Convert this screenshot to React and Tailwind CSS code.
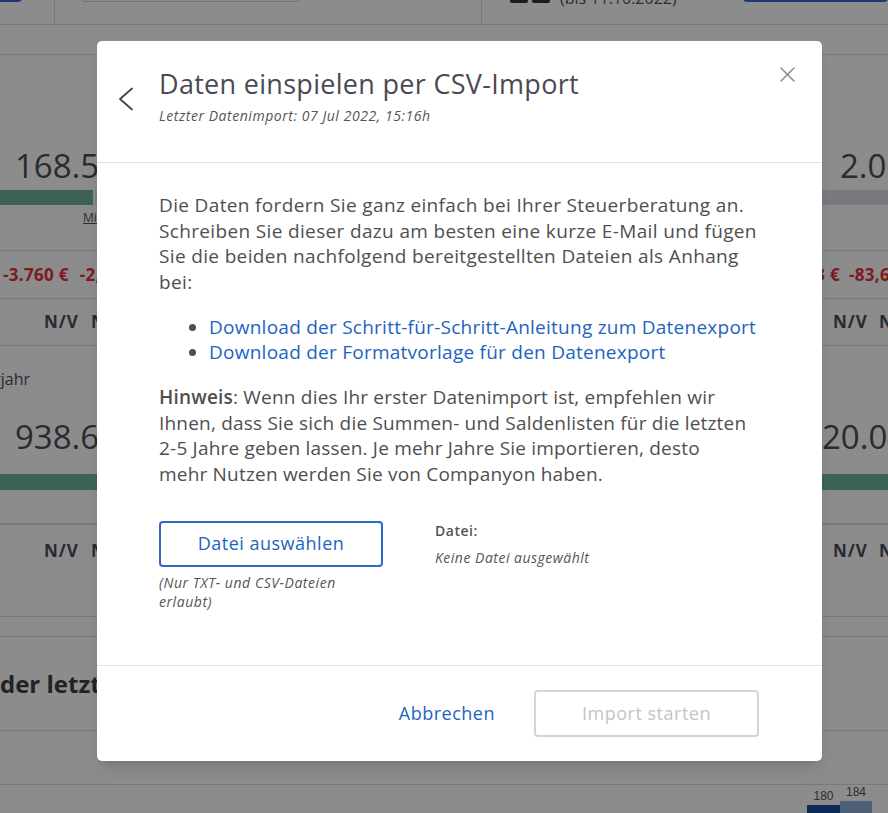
import React from 'react';

const font = { fontFamily: '"Open Sans", "Noto Sans", sans-serif' };

// Dashboard im Hintergrund (wird vom Overlay abgedunkelt)
const Dashboard = () => {
  return (
    <div className="w-[888px] h-[813px] overflow-hidden bg-white text-[#4d4d57]">
      {/* Toolbar */}
      <div className="flex h-[25px] border-b border-[#dcdcdc] overflow-hidden">
        <div className="w-[55px] border-r border-[#dcdcdc] shrink-0">
          <div className="w-[22px] h-[30px] -mt-[28px] bg-[#2f6ad0] rounded-br-[4px]" />
        </div>
        <div className="w-[427px] border-r border-[#dcdcdc] shrink-0 pl-[27px]">
          <div className="w-[218px] h-[30px] -mt-[28px] border border-[#cfcfcf] rounded-[3px]" />
        </div>
        <div className="flex flex-1 items-start">
          <div className="flex gap-[4px] ml-[28px] -mt-[20px]">
            <div className="w-[18px] h-[23px] bg-[#333] rounded-[2px]" />
            <div className="w-[18px] h-[23px] bg-[#333] rounded-[2px]" />
          </div>
          <span className="ml-[10px] -mt-[14px] text-[16px] text-[#555]">(bis 11.10.2022)</span>
          <div className="ml-auto w-[145px] h-[30px] -mt-[28px] border-2 border-[#2f6ad0] rounded-[4px]" />
        </div>
      </div>
      <div className="h-[30px] border-b border-[#dcdcdc]" />

      {/* Kennzahlen */}
      <div className="flex h-[196px] border-b border-[#dcdcdc]">
        <div className="w-[444px] shrink-0 flex flex-col">
          <div className="pl-[15px] pt-[91px] text-[33px] leading-[40px] whitespace-nowrap">168.500 €</div>
          <div className="flex mt-[4px] h-[15px]">
            <div className="w-[93px] bg-[#6fb4a0]" />
            <div className="w-[140px] bg-[#e8e8f0] ml-[2px]" />
          </div>
          <div className="pl-[83px] mt-[4px] text-[12px] underline text-[#555]">Mittelwert</div>
        </div>
        <div className="w-[444px] shrink-0 flex flex-col">
          <div className="pl-[396px] pt-[91px] text-[33px] leading-[40px] whitespace-nowrap">2.000 €</div>
          <div className="flex mt-[4px] h-[15px]">
            <div className="w-[444px] bg-[#dcdcea]" />
          </div>
        </div>
      </div>

      <div className="flex h-[48px] items-center border-b border-[#dcdcdc] text-[17px] tracking-[0.3px] font-bold text-[#e8303a] whitespace-nowrap">
        <div className="w-[444px] shrink-0 flex gap-[11px]">
          <span className="ml-[3px]">-3.760 €</span>
          <span>-2,2 %</span>
        </div>
        <div className="w-[444px] shrink-0 flex">
          <div className="w-[396px] shrink-0 flex justify-end overflow-hidden">
            <span>-4.113 €</span>
          </div>
          <span className="ml-[9px]">-83,6 %</span>
        </div>
      </div>

      <div className="flex h-[47px] items-center border-b border-[#dcdcdc] text-[17px] tracking-[1px] font-bold text-[#4d4d60] whitespace-nowrap">
        <div className="w-[444px] shrink-0 flex gap-[12px] pl-[44px]">
          <span>N/V</span>
          <span>N/V</span>
        </div>
        <div className="w-[444px] shrink-0 flex gap-[11px] pl-[389px]">
          <span>N/V</span>
          <span>N/V</span>
        </div>
      </div>

      <div className="flex h-[179px] border-b border-[#dcdcdc]">
        <div className="w-[444px] shrink-0 flex flex-col">
          <div className="w-[30px] flex justify-end overflow-hidden whitespace-nowrap pt-[21px] text-[16px] leading-[24px]">
            <span>Vorjahr</span>
          </div>
          <div className="pl-[15px] pt-[26px] text-[33px] leading-[40px] whitespace-nowrap">938.600 €</div>
        </div>
        <div className="w-[444px] shrink-0 flex flex-col">
          <div className="pl-[378px] pt-[71px] text-[33px] leading-[40px] whitespace-nowrap">20.040 €</div>
        </div>
      </div>
      <div className="-mt-[51px] h-[16px] bg-[#6fb4a0] relative" />
      <div className="h-[34px] border-b border-[#dcdcdc]" />

      <div className="flex h-[93px] pt-[14px] border-b border-[#dcdcdc] text-[17px] tracking-[1px] font-bold text-[#4d4d60] whitespace-nowrap">
        <div className="w-[444px] shrink-0 flex gap-[12px] pl-[44px]">
          <span>N/V</span>
          <span>N/V</span>
        </div>
        <div className="w-[444px] shrink-0 flex gap-[11px] pl-[389px]">
          <span>N/V</span>
          <span>N/V</span>
        </div>
      </div>
      <div className="h-[20px] border-b border-[#dcdcdc]" />

      <div className="h-[94px] flex items-center border-b border-[#dcdcdc]">
        <h2 className="text-[24px] font-bold text-[#3d3d48] whitespace-nowrap">der letzten 12 Monate</h2>
      </div>
      <div className="h-[54px] border-b border-[#dcdcdc]" />

      {/* Balkendiagramm unten rechts */}
      <div className="flex justify-end pr-[16px]">
        <div className="flex items-end">
          <div className="flex flex-col items-center w-[33px]">
            <span className="text-[12px] leading-[14px] text-[#555]" style={{ fontFamily: '"Liberation Sans", sans-serif' }}>180</span>
            <div className="w-[33px] h-[20px] mt-[2px] bg-[#1a4f9c]" />
          </div>
          <div className="flex flex-col items-center w-[32px]">
            <span className="text-[12px] leading-[14px] text-[#555]" style={{ fontFamily: '"Liberation Sans", sans-serif' }}>184</span>
            <div className="w-[32px] h-[24px] mt-[2px] bg-[#8fb0d8]" />
          </div>
        </div>
      </div>
    </div>
  );
};

const App = () => {
  return (
    <div className="relative w-[888px] h-[813px] overflow-hidden" style={font}>
      <Dashboard />

      {/* Overlay */}
      <div className="absolute inset-0 bg-black/45" />

      {/* Modal */}
      <div className="absolute left-[97px] top-[41px] w-[725px] h-[720px] bg-white rounded-[5px] shadow-lg flex flex-col">
        {/* Kopfbereich */}
        <div className="relative h-[122px] border-b border-[#e2e2e2] flex shrink-0">
          <button className="ml-[21px] mt-[46px] w-[16px] h-[24px] self-start text-[#444]">
            <svg viewBox="0 0 16 24" width="16" height="24" fill="none" stroke="currentColor" strokeWidth="1.8" strokeLinecap="round" strokeLinejoin="round">
              <polyline points="14,1.5 2,12 14,22.5" />
            </svg>
          </button>
          <div className="ml-[25px] pt-[25px]">
            <h1 className="text-[27px] leading-[35px] tracking-[0.3px] font-medium text-[#4a4a54]">Daten einspielen per CSV-Import</h1>
            <p className="mt-[5px] text-[14px] leading-[20px] tracking-[0.55px] italic text-[#555]">Letzter Datenimport: 07 Jul 2022, 15:16h</p>
          </div>
          <button className="absolute top-[26px] right-[27px] w-[15px] h-[15px] text-[#8a8a8a]">
            <svg viewBox="0 0 15 15" width="15" height="15" fill="none" stroke="currentColor" strokeWidth="1.5" strokeLinecap="round">
              <line x1="1" y1="1" x2="14" y2="14" />
              <line x1="14" y1="1" x2="1" y2="14" />
            </svg>
          </button>
        </div>

        {/* Inhalt */}
        <div className="pl-[62px] pr-[46px] pt-[30px] pb-[53px] text-[19px] leading-[25.5px] text-[#4f4f4f]">
          <p className="mb-[19.5px] tracking-[0.35px]">
            Die Daten fordern Sie ganz einfach bei Ihrer Steuerberatung an.<br />
            Schreiben Sie dieser dazu am besten eine kurze E-Mail und fügen<br />
            Sie die beiden nachfolgend bereitgestellten Dateien als Anhang<br />
            bei:
          </p>
          <ul className="list-disc pl-[50px] mb-[19.5px] tracking-[0.25px]">
            <li>
              <a href="#" className="text-[#1d63c1]">Download der Schritt-für-Schritt-Anleitung zum Datenexport</a>
            </li>
            <li>
              <a href="#" className="text-[#1d63c1]">Download der Formatvorlage für den Datenexport</a>
            </li>
          </ul>
          <p className="tracking-[0.2px]">
            <span className="font-semibold">Hinweis</span>: Wenn dies Ihr erster Datenimport ist, empfehlen wir<br />
            Ihnen, dass Sie sich die Summen- und Saldenlisten für die letzten<br />
            2-5 Jahre geben lassen. Je mehr Jahre Sie importieren, desto<br />
            mehr Nutzen werden Sie von Companyon haben.
          </p>

          <div className="flex gap-[52px] mt-[34px]">
            <div className="w-[224px] shrink-0">
              <button className="w-[224px] h-[46px] border-2 border-[#2a6bc6] rounded-[4px] text-[18px] tracking-[0.5px] text-[#1d63c1]">
                Datei auswählen
              </button>
              <p className="mt-[6px] text-[14px] leading-[19px] tracking-[0.55px] italic text-[#555]">(Nur TXT- und CSV-Dateien erlaubt)</p>
            </div>
            <div className="text-[14px] leading-[20px] tracking-[0.5px] text-[#555]">
              <p className="font-semibold">Datei:</p>
              <p className="mt-[7px] italic">Keine Datei ausgewählt</p>
            </div>
          </div>
        </div>

        {/* Fußbereich */}
        <div className="mt-auto h-[96px] border-t border-[#e2e2e2] flex items-center justify-end pr-[63px] shrink-0">
          <button className="mr-[39px] text-[18px] tracking-[0.5px] text-[#1d63c1]">Abbrechen</button>
          <button disabled className="w-[225px] h-[47px] border-2 border-[#d4d4d4] rounded-[4px] text-[18px] tracking-[0.5px] text-[#c4c4c4]">
            Import starten
          </button>
        </div>
      </div>
    </div>
  );
};

export default App;
